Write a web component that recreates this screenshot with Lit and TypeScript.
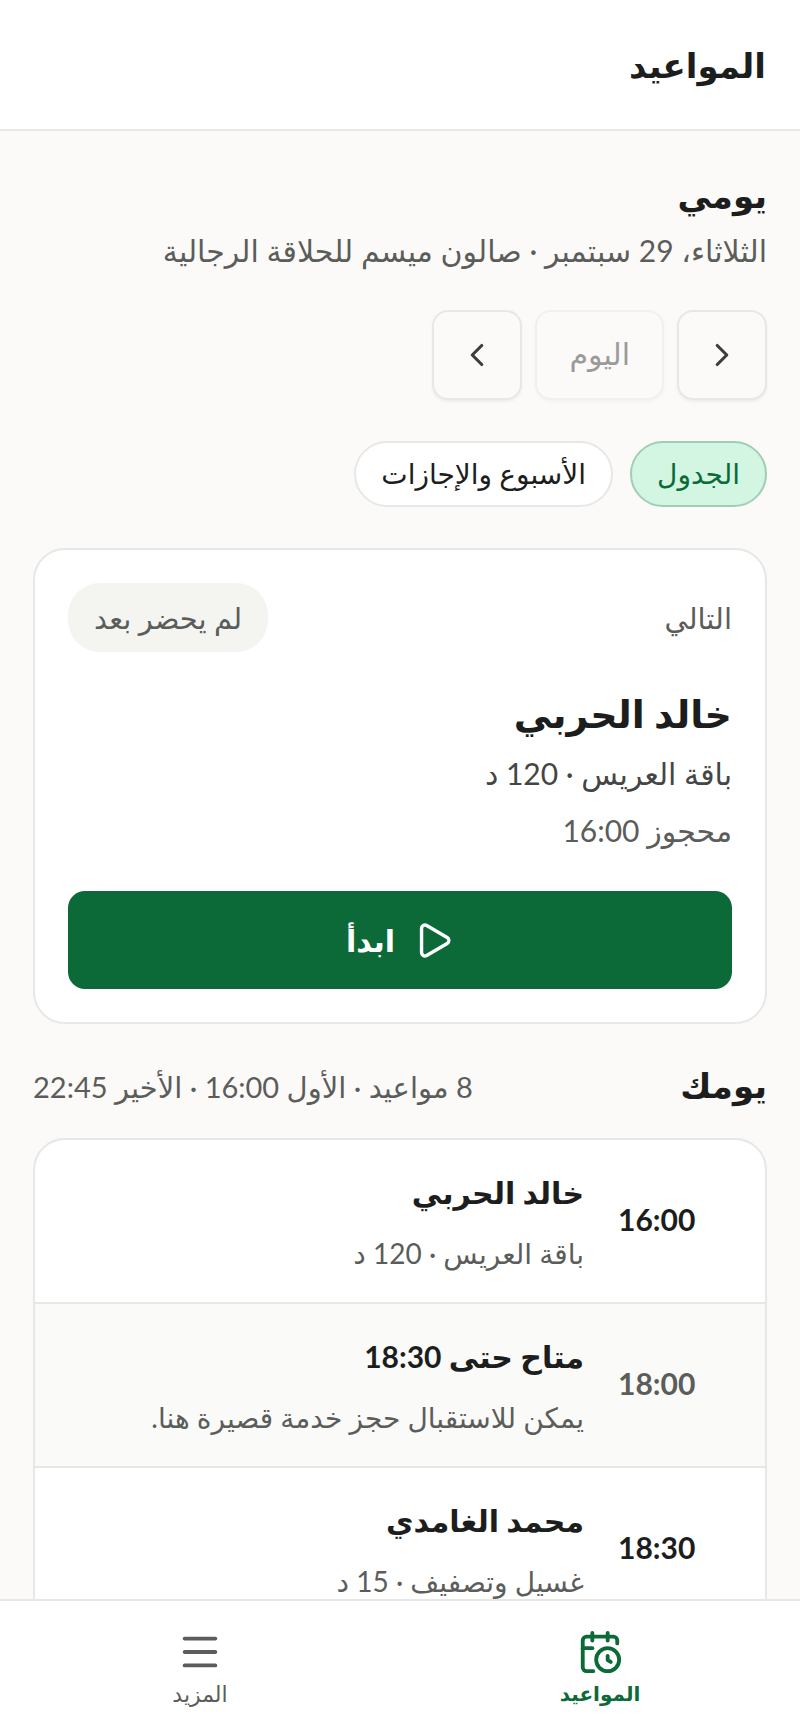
import { LitElement, css, html, svg } from "lit";
import { customElement, property, state } from "lit/decorators.js";
import { classMap } from "lit/directives/class-map.js";

const icons = {
  chevronRight: svg`<path d="m9 18 6-6-6-6" />`,
  chevronLeft: svg`<path d="m15 18-6-6 6-6" />`,
  play: svg`<path d="M5 5a2 2 0 0 1 3.008-1.728l11.997 6.998a2 2 0 0 1 .003 3.458l-12 7A2 2 0 0 1 5 19z" />`,
  calendar: svg`<path d="M16 14v2.2l1.6 1" /><path d="M16 2v4" /><path d="M21 7.5V6a2 2 0 0 0-2-2H5a2 2 0 0 0-2 2v14a2 2 0 0 0 2 2h3.5" /><path d="M3 10h5" /><path d="M8 2v4" /><circle cx="16" cy="16" r="6" />`,
  menu: svg`<path d="M4 5h16" /><path d="M4 12h16" /><path d="M4 19h16" />`,
};

type IconName = keyof typeof icons;

@customElement("line-icon")
class LineIcon extends LitElement {
  @property() name: IconName = "menu";

  static styles = css`
    :host {
      display: block;
      flex: none;
    }
    .glyph {
      display: block;
      width: 100%;
      height: 100%;
      fill: none;
      stroke: currentColor;
      stroke-width: 2;
      stroke-linecap: round;
      stroke-linejoin: round;
    }
  `;

  render() {
    return html`<svg class="glyph" viewBox="0 0 24 24" aria-hidden="true">${icons[this.name]}</svg>`;
  }
}

interface Slot {
  time: string;
  title: string;
  detail: string;
  free?: boolean;
}

const slots: Slot[] = [
  { time: "16:00", title: "خالد الحربي", detail: "باقة العريس · 120 د" },
  { time: "18:00", title: "متاح حتى 18:30", detail: "يمكن للاستقبال حجز خدمة قصيرة هنا.", free: true },
  { time: "18:30", title: "محمد الغامدي", detail: "غسيل وتصفيف · 15 د" },
];

@customElement("app-root")
class AppRoot extends LitElement {
  @state() private tab = "schedule";

  static styles = css`
    :host {
      display: flex;
      flex-direction: column;
      height: 100vh;
      overflow: hidden;
      background: #fbfaf8;
      color: #1c1e1d;
      font-family: Lato, "DejaVu Sans", sans-serif;
      font-size: 28px;
      line-height: 40px;
      --line: #e7e7e5;
      --muted: #5b5d5b;
      --green: #0c6a38;
    }
    * {
      box-sizing: border-box;
    }
    h1,
    h2,
    h3,
    p,
    ul {
      margin: 0;
      padding: 0;
    }
    button {
      font: inherit;
      color: inherit;
      margin: 0;
      cursor: pointer;
    }
    .top {
      flex: none;
      padding: 41px 34px 40px;
      background: #fff;
      border-bottom: 2px solid var(--line);
    }
    .title {
      font-size: 34px;
      line-height: 48px;
    }
    .content {
      flex: 1;
      min-height: 0;
      overflow-y: auto;
      scrollbar-width: none;
      padding: 39px 33px;
    }
    .heading {
      font-size: 34px;
      line-height: 50px;
    }
    .muted {
      color: var(--muted);
    }
    .subtitle {
      font-size: 30px;
      line-height: 60px;
    }
    .stepper {
      display: flex;
      gap: 13px;
      margin-top: 30px;
    }
    .step {
      display: flex;
      align-items: center;
      justify-content: center;
      min-width: 90px;
      height: 90px;
      padding: 0 32px 4px;
      border: 2px solid var(--line);
      border-radius: 16px;
      background: #fbfaf8;
      box-shadow: 0 2px 3px rgb(0 0 0 / 5%);
      color: #3c3e3d;
      font-size: 30px;
    }
    .step:disabled {
      opacity: 0.5;
    }
    .arrow {
      padding: 0;
    }
    .arrow line-icon {
      width: 38px;
      height: 38px;
    }
    .tabs {
      display: flex;
      gap: 17px;
      margin-top: 41px;
    }
    .tab {
      height: 66px;
      padding: 0 25px 3px;
      border: 2px solid var(--line);
      border-radius: 33px;
      background: #fff;
    }
    .selected {
      background: #d3f6e2;
      border-color: #a2cdb5;
      color: var(--green);
    }
    .card {
      background: #fff;
      border: 2px solid var(--line);
      border-radius: 32px;
    }
    .next {
      margin-top: 41px;
      padding: 33px;
    }
    .row {
      display: flex;
      align-items: center;
      justify-content: space-between;
      font-size: 29px;
    }
    .badge {
      padding: 15px 26px 14px;
      border-radius: 32px;
      background: #f4f4f1;
      color: var(--muted);
    }
    .client {
      margin-top: 30px;
      font-size: 38px;
      line-height: 62px;
    }
    .service {
      color: #444645;
      font-size: 30px;
      line-height: 58px;
    }
    .booked {
      font-size: 30px;
      line-height: 56px;
    }
    .start {
      display: flex;
      align-items: center;
      justify-content: center;
      gap: 18px;
      width: 100%;
      height: 98px;
      margin-top: 33px;
      border: 0;
      border-radius: 17px;
      background: var(--green);
      color: #fff;
      font-size: 30px;
      font-weight: bold;
    }
    .start line-icon {
      width: 41px;
      height: 41px;
    }
    .dayhead {
      align-items: baseline;
      margin-top: 36px;
      margin-bottom: 28px;
    }
    .day {
      overflow: hidden;
      list-style: none;
    }
    .slot {
      display: flex;
      align-items: center;
      gap: 34px;
      padding: 18px 32px 22px;
    }
    .slot + .slot {
      border-top: 2px solid var(--line);
    }
    .free {
      background: #fafaf8;
    }
    .time {
      width: 115px;
      flex: none;
      text-align: end;
      font-size: 30px;
      font-weight: bold;
    }
    .free .time {
      color: var(--muted);
    }
    .name {
      font-size: 30px;
      line-height: 68px;
    }
    .detail {
      line-height: 54px;
      color: var(--muted);
    }
    .nav {
      flex: none;
      display: flex;
      border-top: 2px solid var(--line);
      background: #fff;
    }
    .link {
      flex: 1;
      display: flex;
      flex-direction: column;
      align-items: center;
      padding: 28px 0 20px;
      color: var(--muted);
      font-size: 22px;
      line-height: 37px;
      text-decoration: none;
    }
    .link line-icon {
      width: 46px;
      height: 46px;
    }
    .current {
      color: var(--green);
      font-size: 20px;
      font-weight: bold;
    }
  `;

  private tabButton(id: string, label: string) {
    const on = this.tab === id;
    return html`<button
      class=${classMap({ tab: true, selected: on })}
      role="tab"
      aria-selected=${on}
      @click=${() => (this.tab = id)}
    >${label}</button>`;
  }

  connectedCallback() {
    super.connectedCallback();
    this.dir = "rtl";
    this.lang = "ar";
  }

  render() {
    return html`
      <header class="top"><h1 class="title">المواعيد</h1></header>
      <main class="content">
        <h2 class="heading">يومي</h2>
        <p class="subtitle muted">الثلاثاء، 29 سبتمبر · صالون ميسم للحلاقة الرجالية</p>
        <div class="stepper">
          <button class="step arrow" aria-label="اليوم السابق"><line-icon name="chevronRight"></line-icon></button>
          <button class="step" disabled>اليوم</button>
          <button class="step arrow" aria-label="اليوم التالي"><line-icon name="chevronLeft"></line-icon></button>
        </div>
        <div class="tabs" role="tablist">
          ${this.tabButton("schedule", "الجدول")} ${this.tabButton("week", "الأسبوع والإجازات")}
        </div>
        <section class="card next">
          <div class="row">
            <span class="muted">التالي</span>
            <span class="badge">لم يحضر بعد</span>
          </div>
          <h3 class="client">خالد الحربي</h3>
          <p class="service">باقة العريس · 120 د</p>
          <p class="booked muted">محجوز 16:00</p>
          <button class="start"><line-icon name="play"></line-icon><span>ابدأ</span></button>
        </section>
        <div class="row dayhead">
          <h2 class="heading">يومك</h2>
          <span class="muted">8 مواعيد · الأول 16:00 · الأخير 22:45</span>
        </div>
        <ul class="card day">
          ${slots.map(
            (s) => html`<li class=${classMap({ slot: true, free: !!s.free })}>
              <time class="time">${s.time}</time>
              <div>
                <h3 class="name">${s.title}</h3>
                <p class="detail">${s.detail}</p>
              </div>
            </li>`,
          )}
        </ul>
      </main>
      <nav class="nav">
        <a class="link current" href="#appointments" aria-current="page"><line-icon name="calendar"></line-icon>المواعيد</a>
        <a class="link" href="#more"><line-icon name="menu"></line-icon>المزيد</a>
      </nav>
    `;
  }
}
